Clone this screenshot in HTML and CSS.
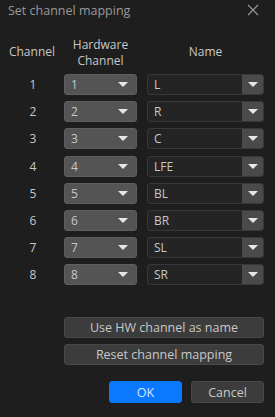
FILE: index.html
```html
<!DOCTYPE html>
<html lang="en">
<head>
    <meta charset="UTF-8">
    <title>Set channel mapping</title>
    <link rel="stylesheet" href="styles.css">
</head>
<body>
<div class="dialog">
    <div class="titlebar">
        <span class="title">Set channel mapping</span>
        <svg class="close" width="12" height="12" viewBox="0 0 12 12">
            <path d="M1 1 L11 11 M11 1 L1 11" stroke="#9a9a9a" stroke-width="1.1" fill="none"/>
        </svg>
    </div>

    <div class="mapping">
        <div class="head">Channel</div>
        <div class="head hw-head">Hardware<br>Channel</div>
        <div class="head">Name</div>

        <div class="num">1</div>
        <div class="hw"><span>1</span><i class="arrow"></i></div>
        <div class="name"><span>L</span><b><i class="arrow"></i></b></div>

        <div class="num">2</div>
        <div class="hw"><span>2</span><i class="arrow"></i></div>
        <div class="name"><span>R</span><b><i class="arrow"></i></b></div>

        <div class="num">3</div>
        <div class="hw"><span>3</span><i class="arrow"></i></div>
        <div class="name"><span>C</span><b><i class="arrow"></i></b></div>

        <div class="num">4</div>
        <div class="hw"><span>4</span><i class="arrow"></i></div>
        <div class="name"><span>LFE</span><b><i class="arrow"></i></b></div>

        <div class="num">5</div>
        <div class="hw"><span>5</span><i class="arrow"></i></div>
        <div class="name"><span>BL</span><b><i class="arrow"></i></b></div>

        <div class="num">6</div>
        <div class="hw"><span>6</span><i class="arrow"></i></div>
        <div class="name"><span>BR</span><b><i class="arrow"></i></b></div>

        <div class="num">7</div>
        <div class="hw"><span>7</span><i class="arrow"></i></div>
        <div class="name"><span>SL</span><b><i class="arrow"></i></b></div>

        <div class="num">8</div>
        <div class="hw"><span>8</span><i class="arrow"></i></div>
        <div class="name"><span>SR</span><b><i class="arrow"></i></b></div>
    </div>

    <div class="actions">
        <button class="btn">Use HW channel as name</button>
        <button class="btn">Reset channel mapping</button>
    </div>

    <div class="footer">
        <button class="btn ok">OK</button>
        <button class="btn">Cancel</button>
    </div>
</div>
</body>
</html>
```

FILE: styles.css
```css
body {
    margin: 0;
    background-color: #1e1e1e;
    font-family: "Open Sans", "Noto Sans", sans-serif;
    font-size: 12px;
    color: #c8c8c8;
}
.dialog {
    width: 275px;
    height: 417px;
    overflow: hidden;
}
.titlebar {
    display: flex;
    align-items: center;
    justify-content: space-between;
    height: 20px;
    padding: 0 16px 0 8px;
}
.title {
    color: #9a9a9a;
    font-size: 12.5px;
}
.close {
    display: block;
}
.mapping {
    display: grid;
    grid-template-columns: 64px 83px 117px;
    grid-template-rows: 30.8px;
    grid-auto-rows: 21px;
    row-gap: 6.2px;
    margin-top: 17px;
}
.head {
    display: flex;
    align-items: flex-start;
    justify-content: center;
    text-align: center;
    line-height: 16px;
    padding-top: 7px;
}
.hw-head {
    padding-top: 0;
    margin-right: 10px;
}
.num {
    display: flex;
    align-items: center;
    justify-content: center;
    padding-left: 2px;
}
.hw, .name {
    display: flex;
    align-items: center;
    height: 21px;
    box-sizing: border-box;
    border-radius: 3px;
}
.hw {
    width: 73px;
    background-color: #545454;
    border: 1px solid #5e5e5e;
    padding: 0 8px 0 6px;
    justify-content: space-between;
}
.name {
    background-color: #242424;
    border: 1px solid #383838;
    padding-left: 6px;
    justify-content: space-between;
    overflow: hidden;
}
.name b {
    display: flex;
    align-items: center;
    justify-content: center;
    width: 21px;
    height: 100%;
    background-color: #4a4a4a;
}
.arrow {
    display: block;
    width: 0;
    height: 0;
    border-left: 5px solid transparent;
    border-right: 5px solid transparent;
    border-top: 5px solid #e6e6e6;
}
.actions {
    display: flex;
    flex-direction: column;
    gap: 6px;
    margin: 32px 11px 0 64px;
}
.btn {
    height: 21px;
    font-family: inherit;
    font-size: 12.5px;
    color: #c8c8c8;
    background-color: #3c3c3c;
    border: 1px solid #484848;
    border-radius: 3px;
    padding: 0;
}
.footer {
    display: flex;
    justify-content: flex-end;
    gap: 9px;
    margin: 16px 11px 0 0;
}
.footer .btn {
    width: 73px;
    height: 22px;
}
.footer .ok {
    background-color: #0a78ff;
    border-color: #0a78ff;
    color: #d8e8ff;
}
```
